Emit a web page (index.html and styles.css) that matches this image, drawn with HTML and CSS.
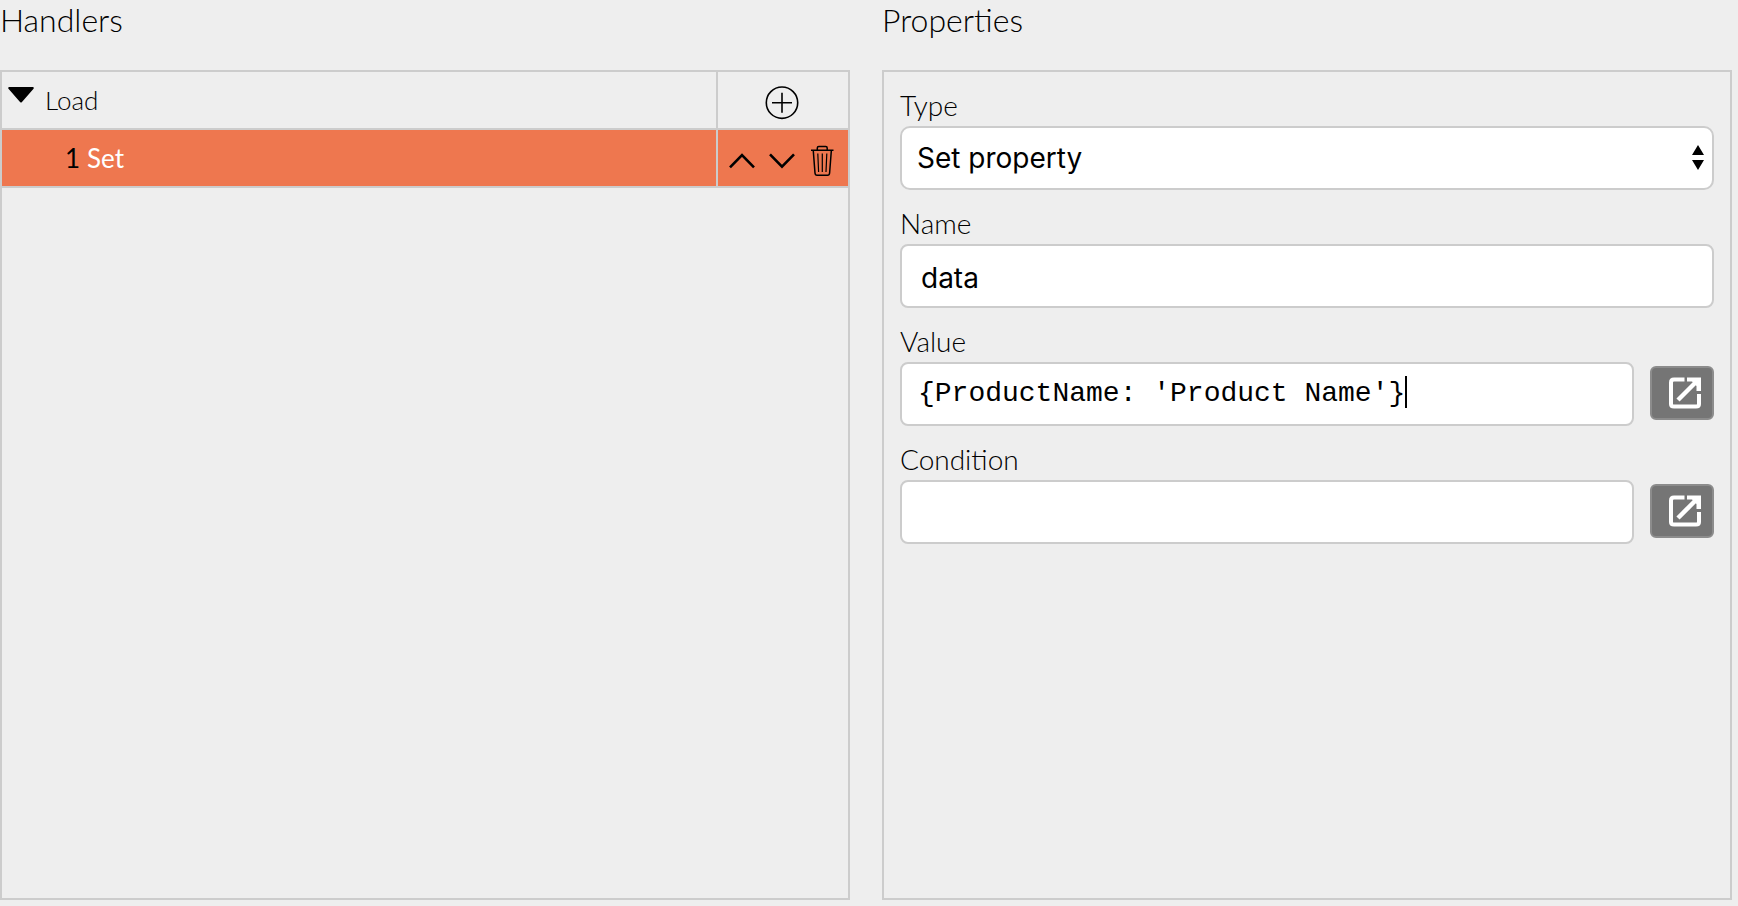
FILE: index.html
```html
<!DOCTYPE html>
<html lang="en">
<head>
<meta charset="utf-8">
<title>Handlers</title>
<link rel="stylesheet" href="styles.css">
</head>
<body>
<main class="editor">
  <section class="column">
    <h2 class="heading">Handlers</h2>
    <div class="panel">
      <div class="row">
        <div class="row-name">
          <button class="toggle" type="button" aria-label="Collapse Load">
            <svg width="28" height="56" viewBox="0 0 28 56"><path d="M2.200 16H25.800L14 29.500Z" stroke="#000" stroke-width="2" stroke-linejoin="round"/></svg>
          </button>
          <span>Load</span>
        </div>
        <div class="row-actions row-actions-single">
          <button class="icon-button" type="button" aria-label="Add action">
            <svg width="40" height="56" viewBox="0 0 40 56" fill="none" stroke="#000"><circle cx="20" cy="30.700" r="15.700" stroke-width="1.600"/><path d="M10 30.700H30M20 20.700V40.700" stroke-width="1.600"/></svg>
          </button>
        </div>
      </div>
      <div class="row row-selected">
        <div class="row-name row-child"><span>1</span><span class="action-name">Set</span></div>
        <div class="row-actions">
          <button class="icon-button" type="button" aria-label="Move up">
            <svg width="40" height="56" viewBox="0 0 40 56" fill="none" stroke="#000" stroke-width="2.600"><path d="M8 37.300L20 25L32 37.300"/></svg>
          </button>
          <button class="icon-button" type="button" aria-label="Move down">
            <svg width="40" height="56" viewBox="0 0 40 56" fill="none" stroke="#000" stroke-width="2.600"><path d="M8 24.300L20 36.600L32 24.300"/></svg>
          </button>
          <button class="icon-button" type="button" aria-label="Delete">
            <svg width="40" height="56" viewBox="0 0 40 56" fill="none" stroke="#000" stroke-width="1.500"><path d="M9 20.300H31.500M15.300 20V18Q15.300 16.500 16.800 16.500H23.700Q25.200 16.500 25.200 18V20M11.300 21L13 43Q13.200 45.200 15 45.200H25.600Q27.400 45.200 27.600 43L29.300 21"/><path d="M15.800 23.500L16.600 42M20.300 23.500V42M24.800 23.500L24 42" stroke-width="1.200"/></svg>
          </button>
        </div>
      </div>
    </div>
  </section>

  <section class="column">
    <h2 class="heading">Properties</h2>
    <form class="panel form">
      <div class="field">
        <label class="label" for="type">Type</label>
        <div class="select-wrap">
          <select class="control select" id="type"><option>Set property</option></select>
          <svg class="select-arrows" width="12" height="25" viewBox="0 0 12 25"><path d="M6 0L12 10H0ZM0 15H12L6 25Z"/></svg>
        </div>
      </div>
      <div class="field">
        <label class="label" for="name">Name</label>
        <input class="control text-input" id="name" type="text" value="data">
      </div>
      <div class="field">
        <label class="label" for="value">Value</label>
        <div class="field-line">
          <div class="control code-box">
            <input class="code-input" id="value" type="text" value="{ProductName: 'Product Name'}" spellcheck="false"><span class="caret"></span>
          </div>
          <button class="open-button" type="button" aria-label="Open value editor">
            <svg width="32" height="32" viewBox="0 0 32 32" fill="none" stroke="#fff" stroke-width="4"><path d="M15.500 2.500H5Q2 2.500 2 5.500V27Q2 29.500 5 29.500H27Q30 29.500 30 27V17"/><path d="M9 23L27 5" stroke-width="4.500"/><path d="M18 .5H32V14H27.500V9L23 4.500H18Z" fill="#fff" stroke="none"/></svg>
          </button>
        </div>
      </div>
      <div class="field">
        <label class="label" for="condition">Condition</label>
        <div class="field-line">
          <div class="control code-box">
            <input class="code-input" id="condition" type="text" spellcheck="false">
          </div>
          <button class="open-button" type="button" aria-label="Open condition editor">
            <svg width="32" height="32" viewBox="0 0 32 32" fill="none" stroke="#fff" stroke-width="4"><path d="M15.500 2.500H5Q2 2.500 2 5.500V27Q2 29.500 5 29.500H27Q30 29.500 30 27V17"/><path d="M9 23L27 5" stroke-width="4.500"/><path d="M18 .5H32V14H27.500V9L23 4.500H18Z" fill="#fff" stroke="none"/></svg>
          </button>
        </div>
      </div>
    </form>
  </section>
</main>
</body>
</html>
```
FILE: styles.css
```css
* {
  box-sizing: border-box;
}

body {
  margin: 0;
  background: #eeeeee;
  color: #000;
  font-family: Lato, "Open Sans", sans-serif;
  font-weight: 300;
}

button,
input,
select {
  margin: 0;
  padding: 0;
  border: 0;
  background: none;
  color: inherit;
  outline: none;
}

svg {
  display: block;
}

.editor {
  display: grid;
  grid-template-columns: 1fr 1fr;
  gap: 32px;
  min-height: 100vh;
  padding: 0 6px 6px 0;
}

.column {
  display: flex;
  flex-direction: column;
  min-width: 0;
}

.heading {
  margin: 0 0 30px;
  font-size: 32px;
  font-weight: 300;
  line-height: 40px;
}

.panel {
  flex: 1;
  border: 2px solid #cccccc;
}

/* Handler tree */

.row {
  display: flex;
  border-bottom: 2px solid #cccccc;
  font-size: 26px;
  line-height: 56px;
}

.row-selected {
  background: #ee774f;
  font-weight: 400;
}

.row-name {
  display: flex;
  flex: 1;
  gap: 10px;
  padding-left: 5px;
}

.row-child {
  gap: 7px;
  padding-left: 63px;
}

.action-name {
  color: #fff;
}

.row-actions {
  display: flex;
  width: 132px;
  padding-left: 4px;
  border-left: 2px solid #cccccc;
}

.row-actions-single {
  padding-left: 44px;
}

/* Property form */

.form {
  display: flex;
  flex-direction: column;
  gap: 16px;
  padding: 16px;
}

.field {
  display: flex;
  flex-direction: column;
  gap: 4px;
}

.label {
  font-size: 28px;
  line-height: 34px;
}

.control {
  width: 100%;
  height: 64px;
  border: 2px solid #cccccc;
  border-radius: 8px;
  background: #fff;
  font-family: Inter, Roboto, sans-serif;
  font-size: 28px;
}

.select-wrap {
  position: relative;
}

.select {
  display: block;
  padding: 0 40px 0 15px;
  border-radius: 10px;
  appearance: none;
}

.select-arrows {
  position: absolute;
  top: 19px;
  right: 10px;
  pointer-events: none;
}

.text-input {
  padding: 4px 19px 0;
}

.field-line {
  display: flex;
  align-items: flex-start;
  gap: 16px;
}

.code-box {
  display: flex;
  flex: 1;
  align-items: flex-start;
  min-width: 0;
  padding: 12px 16px;
}

.code-input {
  height: 32px;
  padding-top: 2px;
  font-family: "Liberation Mono", monospace;
  font-size: 28px;
  line-height: 30px;
  field-sizing: content;
}

.caret {
  width: 2px;
  height: 32px;
  background: #000;
}

.open-button {
  display: flex;
  align-items: center;
  width: 64px;
  height: 54px;
  margin-top: 4px;
  padding-left: 17px;
  border: 2px solid #8c8c8c;
  border-radius: 6px;
  background: #757575;
}
```
